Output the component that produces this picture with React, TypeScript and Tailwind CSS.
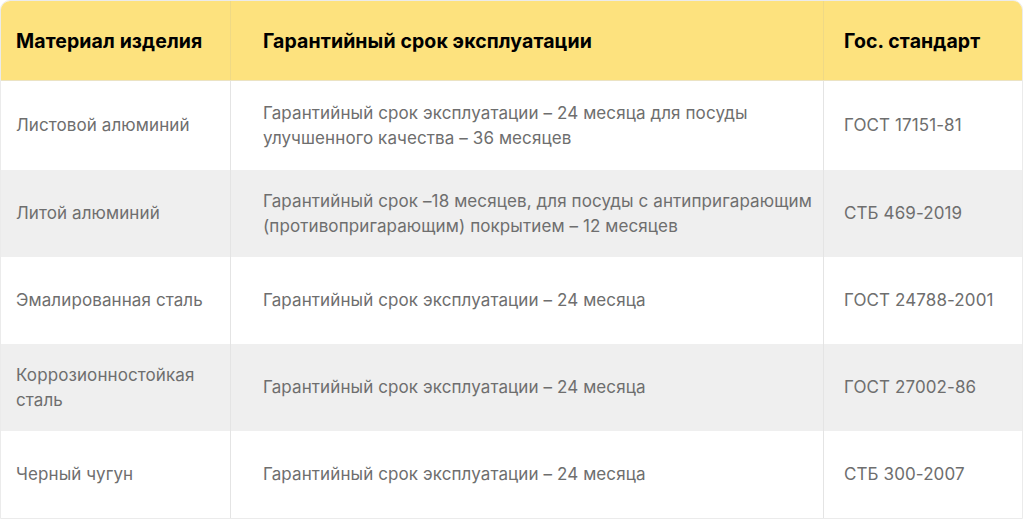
import React from "react";

const rows = [
  {
    material: ["Листовой алюминий"],
    term: ["Гарантийный срок эксплуатации – 24 месяца для посуды", "улучшенного качества – 36 месяцев"],
    std: "ГОСТ 17151-81",
  },
  {
    material: ["Литой алюминий"],
    term: ["Гарантийный срок –18 месяцев, для посуды с антипригарающим", "(противопригарающим) покрытием – 12 месяцев"],
    std: "СТБ 469-2019",
  },
  {
    material: ["Эмалированная сталь"],
    term: ["Гарантийный срок эксплуатации – 24 месяца"],
    std: "ГОСТ 24788-2001",
  },
  {
    material: ["Коррозионностойкая", "сталь"],
    term: ["Гарантийный срок эксплуатации – 24 месяца"],
    std: "ГОСТ 27002-86",
  },
  {
    material: ["Черный чугун"],
    term: ["Гарантийный срок эксплуатации – 24 месяца"],
    std: "СТБ 300-2007",
  },
];

export default function App() {
  return (
    <div className="w-[1024px] h-[521px] bg-white" style={{ fontFamily: "Inter, 'Noto Sans', sans-serif" }}>
      <div className="w-[1023px] rounded-t-[10px] border border-[#ebebeb] overflow-hidden">
        {/* шапка */}
        <div className="grid grid-cols-[229px_593px_1fr] h-[80px] bg-[#fde27e] border-b border-[#ebe3c4] text-[19.5px] font-bold text-black tracking-[0.1px]">
          <div className="flex items-center pl-[15px] pt-[2px]">Материал изделия</div>
          <div className="flex items-center pl-[32px] pt-[2px] border-l border-[#efd985]">Гарантийный срок эксплуатации</div>
          <div className="flex items-center pl-[20px] pt-[2px] border-l border-[#efd985]">Гос. стандарт</div>
        </div>

        {rows.map((r, i) => (
          <div
            key={i}
            className={`grid grid-cols-[229px_593px_1fr] text-[17px] leading-[25px] text-[#6e6e6e] tracking-[0.1px] ${
              i % 2 === 1 ? "bg-[#efefef]" : "bg-white"
            } ${i === 0 ? "h-[89px]" : "h-[87px]"}`}
          >
            <div className="flex flex-col justify-center pl-[15px] whitespace-nowrap">
              {r.material.map((l) => (
                <span key={l}>{l}</span>
              ))}
            </div>
            <div className="flex flex-col justify-center pl-[32px] whitespace-nowrap border-l border-[#e4e4e4]">
              {r.term.map((l) => (
                <span key={l}>{l}</span>
              ))}
            </div>
            <div className="flex items-center pl-[20px] border-l border-[#e4e4e4]">{r.std}</div>
          </div>
        ))}
      </div>
    </div>
  );
}
